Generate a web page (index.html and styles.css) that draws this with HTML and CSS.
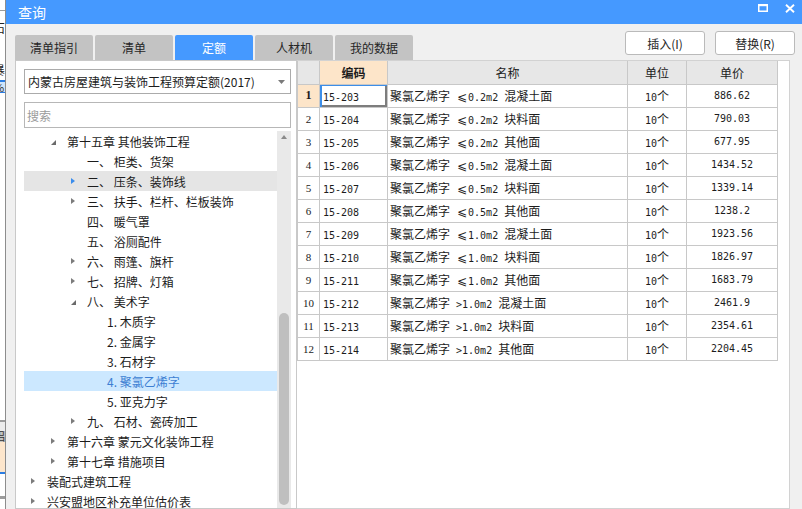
FILE: index.html
```html
<!DOCTYPE html>
<html lang="zh-CN">
<head>
<meta charset="utf-8">
<title>查询</title>
<link rel="stylesheet" href="styles.css">
</head>
<body>
<div class="screen">
  <div class="behind">
    <div class="bk-white h10"></div>
    <div class="bk-gray h1"></div>
    <div class="bk-white h10"></div>
    <div class="frag">石</div>
    <div class="bk-white h28"></div>
    <div class="frag">暴</div>
    <div class="bk-white h3"></div>
    <div class="bk-blue h2"></div>
    <div class="bk-lightblue frag-s">%</div>
    <div class="bk-blue h1"></div>
    <div class="bk-white grow"></div>
    <div class="bk-gray h2"></div>
    <div class="bk-light h9"></div>
    <div class="bk-band frag-s">铝</div>
    <div class="bk-peach h30"></div>
    <div class="bk-blue h2"></div>
    <div class="bk-white h22"></div>
    <div class="bk-gray h3"></div>
    <div class="bk-white h10"></div>
  </div>

  <div class="dialog">
    <div class="titlebar">
      <span class="title">查询</span>
      <div class="winbtns">
        <svg class="ico-max" width="10" height="8" viewBox="0 0 10 8"><rect x="0.75" y="1" width="8.5" height="6.25" fill="none" stroke="#fff" stroke-width="1.5"/><rect x="0" y="0" width="10" height="2.2" fill="#fff"/></svg>
        <svg class="ico-close" width="10" height="9" viewBox="0 0 10 9"><path d="M1 0.8L9 8.2M9 0.8L1 8.2" stroke="#fff" stroke-width="1.9" fill="none"/></svg>
      </div>
    </div>

    <div class="toolbar">
      <div class="tabs">
        <div class="tab">清单指引</div>
        <div class="tab">清单</div>
        <div class="tab active">定额</div>
        <div class="tab">人材机</div>
        <div class="tab">我的数据</div>
      </div>
      <div class="actions">
        <button class="btn">插入(I)</button>
        <button class="btn">替换(R)</button>
      </div>
    </div>

    <div class="main">
      <div class="left">
        <div class="select">
          <span>内蒙古房屋建筑与装饰工程预算定额(2017)</span>
          <svg width="7" height="4" viewBox="0 0 7 4"><path d="M0 0H7L3.5 4Z" fill="#7a7a7a"/></svg>
        </div>
        <div class="search">搜索</div>
        <div class="treewrap">
          <div class="tree">
            <div class="row l1"><i class="ar e"></i><span>第十五章 其他装饰工程</span></div>
            <div class="row l2"><i class="sp"></i><span>一、 柜类、货架</span></div>
            <div class="row l2 hover"><i class="ar c"></i><span>二、 压条、装饰线</span></div>
            <div class="row l2"><i class="ar c"></i><span>三、 扶手、栏杆、栏板装饰</span></div>
            <div class="row l2"><i class="sp"></i><span>四、 暖气罩</span></div>
            <div class="row l2"><i class="sp"></i><span>五、 浴厕配件</span></div>
            <div class="row l2"><i class="ar c"></i><span>六、 雨篷、旗杆</span></div>
            <div class="row l2"><i class="ar c"></i><span>七、 招牌、灯箱</span></div>
            <div class="row l2"><i class="ar e"></i><span>八、 美术字</span></div>
            <div class="row l3"><i class="sp"></i><span>1. 木质字</span></div>
            <div class="row l3"><i class="sp"></i><span>2. 金属字</span></div>
            <div class="row l3"><i class="sp"></i><span>3. 石材字</span></div>
            <div class="row l3 selected"><i class="sp"></i><span>4. 聚氯乙烯字</span></div>
            <div class="row l3"><i class="sp"></i><span>5. 亚克力字</span></div>
            <div class="row l2"><i class="ar c"></i><span>九、 石材、瓷砖加工</span></div>
            <div class="row l1"><i class="ar c"></i><span>第十六章 蒙元文化装饰工程</span></div>
            <div class="row l1"><i class="ar c"></i><span>第十七章 措施项目</span></div>
            <div class="row l0"><i class="ar c"></i><span>装配式建筑工程</span></div>
            <div class="row l0"><i class="ar c"></i><span>兴安盟地区补充单位估价表</span></div>
          </div>
          <div class="vscroll">
            <div class="up"></div>
            <div class="thumb"></div>
          </div>
        </div>
      </div>

      <div class="right">
        <table class="grid">
          <colgroup>
            <col class="c-no"><col class="c-code"><col class="c-name"><col class="c-unit"><col class="c-price">
          </colgroup>
          <thead>
            <tr><th class="no"></th><th class="hl">编码</th><th>名称</th><th>单位</th><th>单价</th></tr>
          </thead>
          <tbody>
            <tr><td class="no cur">1</td><td class="code sel"><span class="m">15-203</span></td><td class="name">聚氯乙烯字<span class="m"> </span><span class="le">⩽</span><span class="m">0.2m2 </span>混凝土面</td><td class="unit"><span class="m">10</span>个</td><td class="price m">886.62</td></tr>
            <tr><td class="no">2</td><td class="code"><span class="m">15-204</span></td><td class="name">聚氯乙烯字<span class="m"> </span><span class="le">⩽</span><span class="m">0.2m2 </span>块料面</td><td class="unit"><span class="m">10</span>个</td><td class="price m">790.03</td></tr>
            <tr><td class="no">3</td><td class="code"><span class="m">15-205</span></td><td class="name">聚氯乙烯字<span class="m"> </span><span class="le">⩽</span><span class="m">0.2m2 </span>其他面</td><td class="unit"><span class="m">10</span>个</td><td class="price m">677.95</td></tr>
            <tr><td class="no">4</td><td class="code"><span class="m">15-206</span></td><td class="name">聚氯乙烯字<span class="m"> </span><span class="le">⩽</span><span class="m">0.5m2 </span>混凝土面</td><td class="unit"><span class="m">10</span>个</td><td class="price m">1434.52</td></tr>
            <tr><td class="no">5</td><td class="code"><span class="m">15-207</span></td><td class="name">聚氯乙烯字<span class="m"> </span><span class="le">⩽</span><span class="m">0.5m2 </span>块料面</td><td class="unit"><span class="m">10</span>个</td><td class="price m">1339.14</td></tr>
            <tr><td class="no">6</td><td class="code"><span class="m">15-208</span></td><td class="name">聚氯乙烯字<span class="m"> </span><span class="le">⩽</span><span class="m">0.5m2 </span>其他面</td><td class="unit"><span class="m">10</span>个</td><td class="price m">1238.2</td></tr>
            <tr><td class="no">7</td><td class="code"><span class="m">15-209</span></td><td class="name">聚氯乙烯字<span class="m"> </span><span class="le">⩽</span><span class="m">1.0m2 </span>混凝土面</td><td class="unit"><span class="m">10</span>个</td><td class="price m">1923.56</td></tr>
            <tr><td class="no">8</td><td class="code"><span class="m">15-210</span></td><td class="name">聚氯乙烯字<span class="m"> </span><span class="le">⩽</span><span class="m">1.0m2 </span>块料面</td><td class="unit"><span class="m">10</span>个</td><td class="price m">1826.97</td></tr>
            <tr><td class="no">9</td><td class="code"><span class="m">15-211</span></td><td class="name">聚氯乙烯字<span class="m"> </span><span class="le">⩽</span><span class="m">1.0m2 </span>其他面</td><td class="unit"><span class="m">10</span>个</td><td class="price m">1683.79</td></tr>
            <tr><td class="no">10</td><td class="code"><span class="m">15-212</span></td><td class="name">聚氯乙烯字<span class="m"> &gt;1.0m2 </span>混凝土面</td><td class="unit"><span class="m">10</span>个</td><td class="price m">2461.9</td></tr>
            <tr><td class="no">11</td><td class="code"><span class="m">15-213</span></td><td class="name">聚氯乙烯字<span class="m"> &gt;1.0m2 </span>块料面</td><td class="unit"><span class="m">10</span>个</td><td class="price m">2354.61</td></tr>
            <tr><td class="no">12</td><td class="code"><span class="m">15-214</span></td><td class="name">聚氯乙烯字<span class="m"> &gt;1.0m2 </span>其他面</td><td class="unit"><span class="m">10</span>个</td><td class="price m">2204.45</td></tr>
          </tbody>
        </table>
      </div>
    </div>
  </div>
</div>
</body>
</html>
```

FILE: styles.css
```css
* { box-sizing: border-box; }
html, body { margin: 0; padding: 0; }
body {
  width: 802px;
  height: 509px;
  overflow: hidden;
  font-family: "Noto Sans CJK SC", "Noto Sans", sans-serif;
  font-size: 12px;
  color: #1c1c1c;
  background: #fff;
}
.screen { display: flex; width: 802px; height: 509px; overflow: hidden; }

/* window behind the dialog */
.behind {
  width: 6px; flex: none;
  border-right: 1px solid #8d8d8d;
  display: flex; flex-direction: column;
  overflow: hidden;
  background: #fff;
}
.behind > div { flex: none; overflow: hidden; white-space: nowrap; }
.bk-white { background: #fff; }
.bk-gray { background: #9c9c9c; }
.bk-blue { background: #2b7de3; }
.bk-light { background: #ececec; }
.bk-peach { background: #fde6cc; }
.h1 { height: 1px; } .h2 { height: 2px; } .h3 { height: 3px; } .h9 { height: 9px; }
.h10 { height: 10px; } .h22 { height: 22px; } .h28 { height: 28px; } .h30 { height: 30px; }
.grow { flex: 1 !important; }
.frag { height: 14px; line-height: 14px; font-size: 12px; text-indent: -7px; color: #222; }
.frag-s { height: 10px; line-height: 10px; font-size: 11px; text-indent: -6px; color: #333; }
.bk-lightblue { background: #cfe5fb; }
.bk-band { background: #c4c4c4; height: 11px !important; }

/* dialog */
.dialog { flex: 1; min-width: 0; display: flex; flex-direction: column; background: #f0f0f0; }
.titlebar {
  height: 24px; flex: none;
  background: #4599ff;
  display: flex; align-items: center; justify-content: space-between;
  padding: 0 7px 0 12px;
}
.title { color: #fff; font-size: 14px; line-height: 24px; }
.winbtns { display: flex; align-items: flex-start; gap: 17px; align-self: flex-start; padding-top: 4px; }
.ico-max, .ico-close { display: block; }

.toolbar {
  height: 36px; flex: none;
  display: flex; justify-content: space-between;
  padding: 0 7px 0 9px;
}
.tabs { display: flex; gap: 2px; align-self: flex-end; }
.tab {
  width: 78px; height: 25px;
  background: #c3c3c3;
  border-radius: 2px 2px 0 0;
  display: flex; align-items: center; justify-content: center;
  color: #262626;
}
.tab.active { background: #4599ff; color: #fff; }
.actions { display: flex; gap: 10px; padding-top: 7px; }
.btn {
  width: 80px; height: 24px;
  border: 1px solid #bababa; border-radius: 3px;
  background: #fff;
  font: inherit; color: #262626;
  display: flex; align-items: center; justify-content: center;
  padding: 0;
}

.main { flex: 1; min-height: 0; display: flex; padding-left: 9px; }

/* left panel */
.left {
  width: 282px; flex: none;
  background: #fff;
  border: 1px solid #c9c9c9;
  padding: 8px 5px 0 8px;
  display: flex; flex-direction: column;
}
.select {
  height: 25px; flex: none;
  border: 1px solid #ababab;
  display: flex; align-items: center; justify-content: space-between;
  padding: 0 5px 0 3px;
  color: #1c1c1c;
}
.select svg { display: block; }
.search {
  height: 26px; flex: none;
  margin-top: 8px;
  border: 1px solid #b7b7b7;
  display: flex; align-items: center;
  padding-left: 2px;
  color: #9b9b9b;
}
.treewrap { flex: 1; min-height: 0; display: flex; margin-top: 3px; }
.tree { flex: 1; min-width: 0; }
.row { height: 20px; display: flex; align-items: center; white-space: nowrap; }
.row.l1 { padding-left: 20px; }
.row.l2 { padding-left: 40px; }
.row.l3 { padding-left: 60px; }
.row.hover { background: #e5e5e5; }
.row.selected { background: #cce8ff; color: #3d7fd3; }
.sp { display: block; flex: none; width: 23px; }
.ar { display: block; flex: none; width: 0; height: 0; }
.ar.c {
  border-left: 4px solid #7c7c7c;
  border-top: 3.5px solid transparent;
  border-bottom: 3.5px solid transparent;
  margin: 0 12px 0 7px;
}
.ar.e {
  border-bottom: 5px solid #6a6a6a;
  border-left: 5px solid transparent;
  margin: 3px 11px 0 7px;
}
.row.hover .ar.c { border-left-color: #3b8ded; }

.vscroll {
  width: 14px; flex: none;
  background: #e9e9e9;
  display: flex; flex-direction: column; align-items: center;
}
.up {
  width: 0; height: 0;
  border-bottom: 4px solid #8a8a8a;
  border-left: 3.5px solid transparent;
  border-right: 3.5px solid transparent;
  margin-top: 4px;
}
.thumb {
  width: 10px; height: 192px;
  margin-top: 174px;
  background: #bfbfbf;
  border-radius: 5px;
}

/* right panel */
.right {
  width: 493px; flex: none;
  background: #fff;
  border: 1px solid #d2d2d2;
  border-left: none;
}
.grid { border-collapse: collapse; table-layout: fixed; width: 480px; }
.c-no { width: 22px; }
.c-code { width: 68px; }
.c-name { width: 240px; }
.c-unit { width: 59px; }
.c-price { width: 91px; }
.grid th, .grid td {
  border: 1px solid #c8c8c8;
  padding: 0;
  height: 23px;
  white-space: nowrap; overflow: hidden;
  color: #1c1c1c;
}
.grid th {
  border-top: none;
  background: #e7e7e7;
  font-weight: normal;
  text-align: center;
  font-size: 12px;
}
.grid th.hl { background: #fde5c9; font-weight: bold; }
.grid td.no {
  text-align: center;
  font-family: "Liberation Serif", serif;
  font-size: 11px;
}
.grid td.no.cur { background: #fde5c9; font-weight: bold; font-size: 12px; }
.grid td.code { padding-left: 3px; }
.grid td.sel { box-shadow: inset 2px 1px 0 #3d8ee8, inset -2px -2px 0 #7d7d7d; }
.grid td.name { padding-left: 2px; }
.grid td.unit { text-align: center; }
.grid td.price { text-align: center; }
.m { font-family: "DejaVu Sans Mono", "Liberation Mono", monospace; font-size: 10px; }
.le { display: inline-block; width: 12px; text-align: center; font-family: "DejaVu Sans", "Noto Sans CJK SC", sans-serif; font-size: 12px; }
```
